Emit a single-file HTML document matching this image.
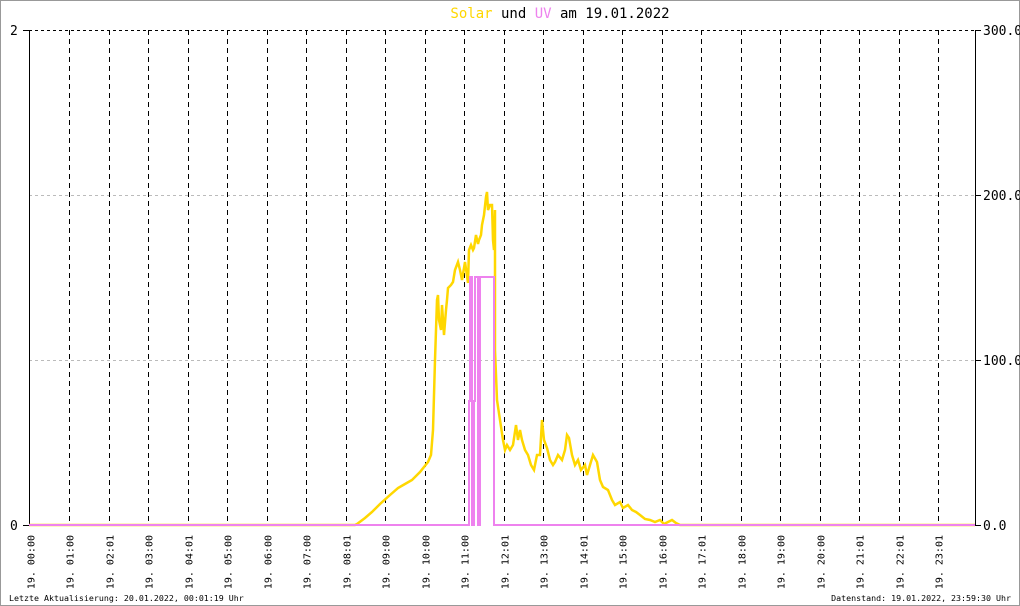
<!DOCTYPE html>
<html><head><style>
html,body{margin:0;padding:0;background:#fff;}
svg{display:block;}
text{font-family:"DejaVu Sans Mono","Liberation Mono",monospace;}
</style></head><body>
<svg width="1020" height="606" viewBox="0 0 1020 606" xmlns="http://www.w3.org/2000/svg">
<rect x="0.5" y="0.5" width="1019" height="605" fill="#fff" stroke="#999"/>
<text x="560" y="18" text-anchor="middle" font-size="14"><tspan fill="#ffd700">Solar</tspan> und <tspan fill="#ee82ee">UV</tspan> am 19.01.2022</text>
<g stroke="#000" stroke-dasharray="3,3" stroke-width="1">
<line x1="29" y1="30.5" x2="975" y2="30.5"/>
</g>
<g stroke="#bbb" stroke-dasharray="3,3" stroke-width="1">
<line x1="29" y1="195.5" x2="975" y2="195.5"/>
<line x1="29" y1="360.5" x2="975" y2="360.5"/>
</g>
<g id="vl" stroke="#000" stroke-dasharray="5,4" stroke-width="1"></g>
<line x1="29.5" y1="30" x2="29.5" y2="526" stroke="#000"/>
<line x1="975.5" y1="30" x2="975.5" y2="526" stroke="#000"/>
<g stroke="#000">
<line x1="23" y1="30.5" x2="29" y2="30.5"/><line x1="23" y1="525.5" x2="29" y2="525.5"/>
<line x1="975" y1="30.5" x2="981" y2="30.5"/><line x1="975" y1="195.5" x2="981" y2="195.5"/>
<line x1="975" y1="360.5" x2="981" y2="360.5"/><line x1="975" y1="525.5" x2="981" y2="525.5"/>
</g>
<g font-size="13">
<text x="10" y="35">2</text><text x="10" y="530">0</text>
<text x="983" y="35">300.0</text><text x="983" y="200">200.0</text>
<text x="983" y="365">100.0</text><text x="983" y="530">0.0</text>
</g>
<polyline fill="none" stroke="#ffd700" stroke-width="2.5" points="29,525 355,525 357,524 365,518 372,512 380,504 390,495 398,488 405,484 412,480 420,472 428,462 431,455 433,430 435,360 437,300 438,295 439,320 441,330 442,305 444,335 446,310 447,300 448,288 451,285 453,282 455,270 458,262 460,270 462,280 465,262 467,276 468,283 469,250 471,245 473,250 474,248 476,235 478,244 479,240 481,235 482,225 484,215 486,197 487,192 488,210 490,205 492,205 493,240 494,250 495,210 495,350 497,400 500,420 503,440 505,450 507,445 510,450 513,445 516,425 518,440 520,430 522,440 525,450 528,455 531,465 534,470 537,455 540,455 542,420 544,440 547,448 550,460 553,465 555,462 558,455 562,460 565,450 567,435 569,438 572,455 575,465 578,460 581,470 585,465 587,475 590,465 593,455 597,462 600,480 603,487 608,490 612,500 615,505 620,502 623,508 628,505 632,510 636,512 640,515 645,519 650,520 655,522 660,520 664,524 668,522 672,520 676,523 680,525 975,525"/>
<polyline fill="none" stroke="#ee82ee" stroke-width="2" points="29,525 469,525 469,401 470,401 470,277 472,277 472,525 474,525 474,401 475,401 475,277 478,277 478,525 480,525 480,277 494,277 494,525 975,525"/>
<g id="lb" font-size="10"></g>
<text x="9" y="601" font-size="8.3">Letzte Aktualisierung: 20.01.2022, 00:01:19 Uhr</text>
<text x="1011" y="601" font-size="8.3" text-anchor="end">Datenstand: 19.01.2022, 23:59:30 Uhr</text>
</svg>
<script>
var ns="http://www.w3.org/2000/svg",vl=document.getElementById("vl"),lb=document.getElementById("lb");
var t=["00:00","01:00","02:01","03:00","04:01","05:00","06:00","07:00","08:01","09:00","10:00","11:00","12:01","13:00","14:01","15:00","16:00","17:01","18:00","19:00","20:00","21:01","22:01","23:01"];
for(var i=0;i<24;i++){var x=Math.round(30+i*39.48)+0.5;
if(i>0){var l=document.createElementNS(ns,"line");l.setAttribute("x1",x);l.setAttribute("x2",x);l.setAttribute("y1",30);l.setAttribute("y2",525);vl.appendChild(l);}
var tx=document.createElementNS(ns,"text");tx.setAttribute("transform","translate("+(x+4)+",535) rotate(-90)");tx.setAttribute("text-anchor","end");tx.textContent="19. "+t[i];lb.appendChild(tx);}
</script>
</body></html>
